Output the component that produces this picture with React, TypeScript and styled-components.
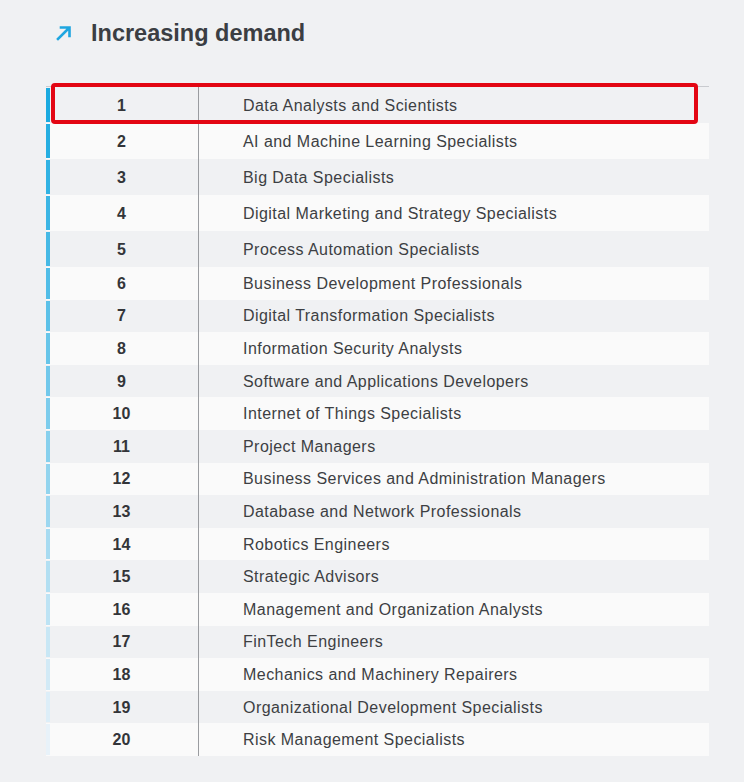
import React from "react";
import styled, { createGlobalStyle } from "styled-components";

const GlobalStyle = createGlobalStyle`
  html, body {
    margin: 0;
    padding: 0;
    background: #f0f1f3;
  }
  body {
    font-family: "Liberation Sans", Arial, sans-serif;
    color: #3a3c40;
  }
`;

const Page = styled.div`
  width: 744px;
  height: 782px;
  background: #f0f1f3;
  box-sizing: border-box;
  padding-top: 14px;
`;

const Header = styled.div`
  display: flex;
  align-items: center;
  gap: 17px;
  padding-left: 54px;
  height: 38px;
`;

const Title = styled.h2`
  margin: 0;
  font-size: 23.5px;
  font-weight: 700;
  color: #3b3e43;
`;

const Table = styled.div`
  position: relative;
  margin: 34px 0 0 46px;
  width: 663px;
  border-top: 1px solid #c9cbcf;
`;

const Row = styled.div<{ $h: number; $alt: boolean }>`
  display: grid;
  grid-template-columns: 4px 148px 1px 1fr;
  height: ${(p) => p.$h}px;
  background: ${(p) => (p.$alt ? "#fafafa" : "#f0f1f3")};
  align-items: stretch;
`;

const Bar = styled.div`
  margin: 1px 0;
`;

const Num = styled.div`
  display: flex;
  align-items: center;
  justify-content: center;
  padding-right: 5px;
  padding-top: 1px;
  font-size: 16px;
  font-weight: 700;
  color: #333539;
`;

const Divider = styled.div`
  background: #9a9ca0;
`;

const Label = styled.div`
  display: flex;
  align-items: center;
  padding-left: 44px;
  padding-top: 1px;
  font-size: 16px;
  letter-spacing: 0.45px;
  color: #3d3f43;
`;

const Highlight = styled.div`
  position: absolute;
  left: 5px;
  top: -4px;
  width: 647px;
  height: 41px;
  box-sizing: border-box;
  border: 4px solid #e30613;
  border-radius: 4px;
  pointer-events: none;
`;

const items = [
  "Data Analysts and Scientists",
  "AI and Machine Learning Specialists",
  "Big Data Specialists",
  "Digital Marketing and Strategy Specialists",
  "Process Automation Specialists",
  "Business Development Professionals",
  "Digital Transformation Specialists",
  "Information Security Analysts",
  "Software and Applications Developers",
  "Internet of Things Specialists",
  "Project Managers",
  "Business Services and Administration Managers",
  "Database and Network Professionals",
  "Robotics Engineers",
  "Strategic Advisors",
  "Management and Organization Analysts",
  "FinTech Engineers",
  "Mechanics and Machinery Repairers",
  "Organizational Development Specialists",
  "Risk Management Specialists",
];

const barColor = (i: number) => {
  const t = i / 19;
  const from = [27, 170, 224];
  const to = [232, 242, 249];
  const c = from.map((f, k) => Math.round(f + (to[k] - f) * t));
  return `rgb(${c[0]}, ${c[1]}, ${c[2]})`;
};

const ArrowIcon = () => (
  <svg width="20" height="20" viewBox="0 0 20 20" fill="none">
    <path
      d="M4 16 L15 5 M7 4.5 H15.5 V13"
      stroke="#1fa6e0"
      strokeWidth="2.6"
      strokeLinecap="square"
    />
  </svg>
);

export default function App() {
  return (
    <>
      <GlobalStyle />
      <Page>
        <Header>
          <ArrowIcon />
          <Title>Increasing demand</Title>
        </Header>
        <Table>
          {items.map((name, i) => (
            <Row key={name} $h={i < 5 ? 36 : 32.6} $alt={i % 2 === 1}>
              <Bar style={{ background: barColor(i) }} />
              <Num>{i + 1}</Num>
              <Divider />
              <Label>{name}</Label>
            </Row>
          ))}
          <Highlight />
        </Table>
      </Page>
    </>
  );
}
